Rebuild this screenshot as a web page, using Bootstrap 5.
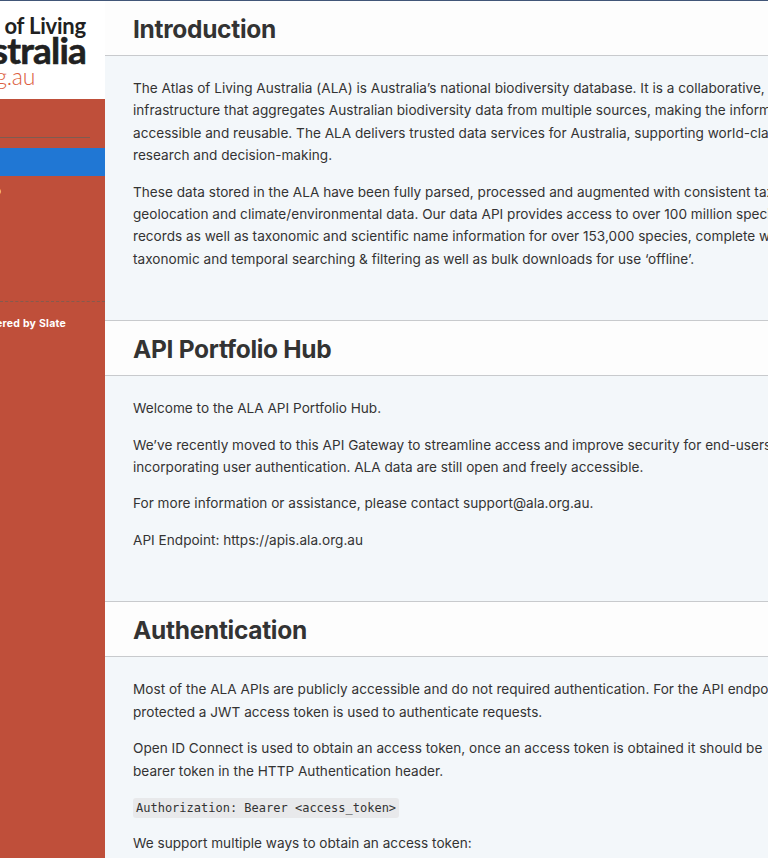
<!DOCTYPE html>
<html lang="en">
<head>
<meta charset="utf-8">
<meta name="viewport" content="width=device-width, initial-scale=1">
<title>ALA API Docs</title>
<link href="https://cdn.jsdelivr.net/npm/bootstrap@5.3.0/dist/css/bootstrap.min.css" rel="stylesheet">
<style>
body{font:14px/22.4px Inter,sans-serif;color:#333;background:#f3f7fa;height:858px}
.page-shell{height:858px}
.window-edge{height:1px;background:#415678;z-index:2}
.side{width:105px;background:#bf4f3a;white-space:nowrap;line-height:1}
.brand-box{height:99px;background:#fff;font-family:Lato,sans-serif;color:#212121;padding:15px 19px 0 0}
.brand-top{font-size:22px;font-weight:700;line-height:22px;letter-spacing:-.2px}
.brand-main{font-size:37px;font-weight:700;line-height:26px;letter-spacing:-.8px;-webkit-text-stroke:.6px #212121}
.brand-url{font-size:23px;font-weight:300;line-height:26px;color:#dc5e40;padding-right:51px;letter-spacing:-.3px}
.side-search{height:39px;margin-right:15px;border-bottom:1px solid #7d5c51}
.side-active{height:28px;margin-top:10px;background:#2077d4}
.side-link{height:125px;padding:9px 104px 0 0;color:#fff;font-size:12px}
.side-foot{border-top:1px dashed #865a4d;padding:17px 39px 0 0;color:#fff;font-size:10.5px;font-weight:700;letter-spacing:.25px}
.doc{white-space:nowrap}
.doc h1{height:56px;margin:50px 0 21px;padding:1px 28px 0;font-size:24.5px;font-weight:700;line-height:55px;letter-spacing:-.3px;background:#fdfdfd;border:solid #c8cacd;border-width:1px 0}
.doc h1:first-child{margin-top:0}
.doc p{margin:0 28px 14px;font-size:13.6px;letter-spacing:.01px}
.doc code{font:12px/1.2 "DejaVu Sans Mono",monospace;letter-spacing:0;color:#333;background:#e8e9eb;padding:3px;border-radius:3px}
</style>
</head>
<body class="overflow-hidden">
<div class="window-edge position-absolute top-0 w-100"></div>
<div class="page-shell d-flex overflow-hidden">
  <aside class="side flex-shrink-0 overflow-hidden">
    <div class="brand-box d-flex flex-column align-items-end">
      <div class="brand-top">of Living</div>
      <div class="brand-main">stralia</div>
      <div class="brand-url">g.au</div>
    </div>
    <div class="side-search"></div>
    <div class="side-active"></div>
    <div class="side-link d-flex justify-content-end">Hub</div>
    <div class="side-foot d-flex justify-content-end">Powered by Slate</div>
  </aside>
  <main class="doc flex-grow-1 overflow-hidden">
    <h1>Introduction</h1>
    <p>The Atlas of Living Australia (ALA) is Australia’s national biodiversity database. It is a collaborative,<br>infrastructure that aggregates Australian biodiversity data from multiple sources, making the information<br>accessible and reusable. The ALA delivers trusted data services for Australia, supporting world-class<br>research and decision-making.</p>
    <p>These data stored in the ALA have been fully parsed, processed and augmented with consistent taxonomic,<br>geolocation and climate/environmental data. Our data API provides access to over 100 million species<br>records as well as taxonomic and scientific name information for over 153,000 species, complete with<br>taxonomic and temporal searching &amp; filtering as well as bulk downloads for use ‘offline’.</p>
    <h1>API Portfolio Hub</h1>
    <p>Welcome to the ALA API Portfolio Hub.</p>
    <p>We’ve recently moved to this API Gateway to streamline access and improve security for end-users<br>incorporating user authentication. ALA data are still open and freely accessible.</p>
    <p>For more information or assistance, please contact support@ala.org.au.</p>
    <p>API Endpoint: https://apis.ala.org.au</p>
    <h1>Authentication</h1>
    <p>Most of the ALA APIs are publicly accessible and do not required authentication. For the API endpoints<br>protected a JWT access token is used to authenticate requests.</p>
    <p>Open ID Connect is used to obtain an access token, once an access token is obtained it should be<br>bearer token in the HTTP Authentication header.</p>
    <p><code>Authorization: Bearer &lt;access_token&gt;</code></p>
    <p>We support multiple ways to obtain an access token:</p>
  </main>
</div>
<script src="https://cdn.jsdelivr.net/npm/bootstrap@5.3.0/dist/js/bootstrap.bundle.min.js"></script>
</body>
</html>
